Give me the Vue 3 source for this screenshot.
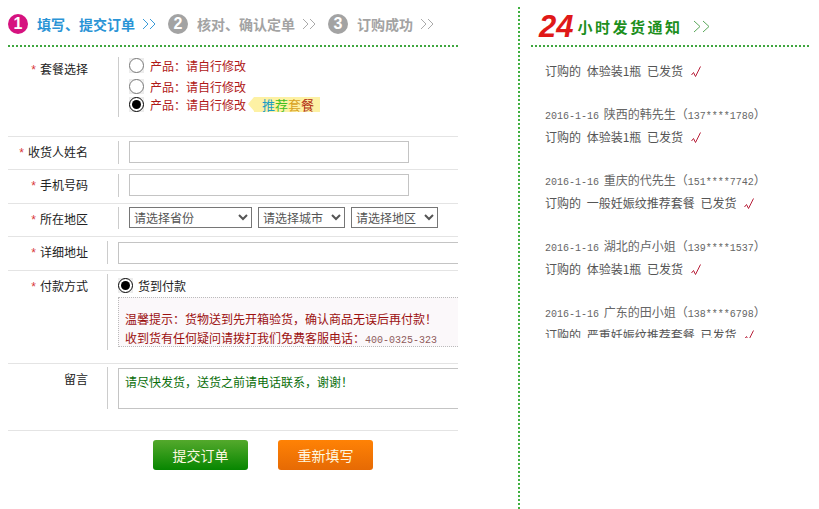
<template>
  <div class="page">
    <div class="col-left">
      <div class="steps">
        <template v-for="(s, i) in pasos" :key="s.texto">
          <span class="num" :class="{ on: i === 0 }">{{ i + 1 }}</span>
          <span class="step-text" :class="{ on: i === 0 }">{{ s.texto }}</span>
          <svg class="chev" width="14" height="12" viewBox="0 0 14 12" fill="none" :stroke="i === 0 ? '#3a9bd8' : '#aaa'" stroke-width="1">
            <path d="M1 1l5 5-5 5M8 1l5 5-5 5" />
          </svg>
        </template>
      </div>

      <form class="form" @submit.prevent>
        <div class="row row-combo">
          <label class="lab"><i>*</i> 套餐选择</label>
          <div class="cell combo">
            <label v-for="(p, i) in 3" :key="p" class="opt" :class="'opt' + p">
              <span class="radio-box"><input type="radio" name="combo" :checked="i === 2"></span>
              <span>产品&#xFF1A;请自行修改</span>
              <span v-if="i === 2" class="tag"><b class="c1">推</b><b class="c2">荐</b><b class="c3">套</b><b class="c4">餐</b></span>
            </label>
          </div>
        </div>

        <div class="row row-a">
          <label class="lab"><i>*</i> 收货人姓名</label>
          <div class="cell"><input class="txt" type="text"></div>
        </div>
        <div class="row row-b">
          <label class="lab"><i>*</i> 手机号码</label>
          <div class="cell"><input class="txt" type="text"></div>
        </div>
        <div class="row row-c">
          <label class="lab"><i>*</i> 所在地区</label>
          <div class="cell selects">
            <select class="s1"><option>请选择省份</option></select>
            <select class="s2"><option>请选择城市</option></select>
            <select class="s2"><option>请选择地区</option></select>
          </div>
        </div>
        <div class="row row-d">
          <label class="lab"><i>*</i> 详细地址</label>
          <div class="cell wide"><input class="txt full" type="text"></div>
        </div>
        <div class="row row-pay">
          <label class="lab"><i>*</i> 付款方式</label>
          <div class="cell wide">
            <label class="opt cod"><span class="radio-box"><input type="radio" name="pay" checked></span><span>货到付款</span></label>
            <div class="note">
              <p>温馨提示&#xFF1A;货物送到先开箱验货&#xFF0C;确认商品无误后再付款&#xFF01;</p>
              <p>收到货有任何疑问请拨打我们免费客服电话&#xFF1A;<span class="mono">400-0325-323</span></p>
            </div>
          </div>
        </div>
        <div class="row row-msg">
          <label class="lab">留言</label>
          <div class="cell wide">
            <textarea class="msg" v-model="mensaje"></textarea>
          </div>
        </div>
        <div class="btns">
          <button class="btn green" type="submit">提交订单</button>
          <button class="btn orange" type="reset">重新填写</button>
        </div>
      </form>
    </div>

    <div class="col-right">
      <div class="head">
        <span class="big">24</span>
        <span class="head-text">小时发货通知</span>
        <svg width="17" height="13" viewBox="0 0 17 13" fill="none" stroke="#5aa85a" stroke-width="1">
          <path d="M1 1l6 5.500-6 5.500M10 1l6 5.500-6 5.500" />
        </svg>
      </div>
      <div class="list">
        <div v-for="e in envios" :key="e.que + e.tel" class="item">
          <div v-if="e.tel" class="who"><span class="mono">{{ e.fecha }}</span> {{ e.quien }}&#xFF08;<span class="mono">{{ e.tel }}</span>&#xFF09;</div>
          <div class="what">订购的 {{ e.que }} 已发货
            <svg class="ok" width="11" height="12" viewBox="0 0 11 12" fill="none" stroke="#b8203a" stroke-width="1">
              <path d="M0.500 9L2.500 6.500 4.500 10.500 9.500 0.500" />
            </svg>
          </div>
        </div>
      </div>
    </div>
  </div>
</template>

<script setup>
import { ref } from 'vue';

const mensaje = ref('请尽快发货\uFF0C送货之前请电话联系\uFF0C谢谢\uFF01');

const pasos = [
  { texto: '填写、提交订单' },
  { texto: '核对、确认定单' },
  { texto: '订购成功' }
];

const envios = [
  { que: '体验装1瓶' },
  { fecha: '2016-1-16', quien: '陕西的韩先生', tel: '137****1780', que: '体验装1瓶' },
  { fecha: '2016-1-16', quien: '重庆的代先生', tel: '151****7742', que: '一般妊娠纹推荐套餐' },
  { fecha: '2016-1-16', quien: '湖北的卢小姐', tel: '139****1537', que: '体验装1瓶' },
  { fecha: '2016-1-16', quien: '广东的田小姐', tel: '138****6798', que: '严重妊娠纹推荐套餐' }
];
</script>

<style>
html, body { background: #fff; }
body { overflow: hidden; }
</style>

<style scoped>
.page {
  display: flex;
  width: 819px;
  height: 509px;
  overflow: hidden;
  font-family: "Noto Sans CJK SC", "Liberation Sans", sans-serif;
  font-size: 12px;
  color: #222;
}

.col-left {
  width: 450px;
  margin-left: 8px;
  flex-shrink: 0;
}

.steps {
  display: flex;
  align-items: center;
  height: 47px;
  padding-top: 3px;
  box-sizing: border-box;
  border-bottom: 2px dotted #3fa63f;
}

.num {
  width: 20px;
  height: 20px;
  border-radius: 50%;
  background: #a3a3a3;
  color: #fff;
  font: bold 16px/20px "Liberation Sans", sans-serif;
  text-align: center;
  margin-right: 9px;
}
.num.on { background: #d6127f; }

.step-text {
  font-size: 14px;
  font-weight: 700;
  color: #a3a3a3;
  white-space: nowrap;
}
.step-text.on { color: #2a94d6; }

.chev { margin: 0 12px 0 7px; }

.row {
  display: flex;
  border-bottom: 1px solid #e4e4e4;
  box-sizing: border-box;
  overflow: hidden;
}

.lab {
  width: 80px;
  flex-shrink: 0;
  text-align: right;
  line-height: 24px;
  color: #222;
  white-space: nowrap;
}
.lab i {
  color: #d8383a;
  font-style: normal;
  font-family: "Liberation Mono", monospace;
}

.cell {
  margin-left: 30px;
  padding-left: 10px;
  border-left: 1px solid #ccc;
  flex: 1;
  min-width: 0;
}
.cell.wide {
  margin-left: 19px;
  padding-left: 10px;
}

.row-combo { height: 90px; padding-top: 10px; }
.combo { height: 60px; display: flex; flex-direction: column; }
.opt {
  display: flex;
  align-items: center;
  color: #b01818;
  height: 20px;
}
.radio-box {
  display: block;
  width: 15px;
  height: 15px;
  margin-right: 6px;
  background: #ececec;
}
.radio-box input {
  display: block;
  width: 15px;
  height: 15px;
  margin: 0;
  accent-color: #000;
}
.opt1 { margin-top: -2px; height: 21px; }
.opt2 { height: 20px; margin-bottom: -2px; }

.tag {
  position: relative;
  display: flex;
  height: 15px;
  line-height: 15px;
  margin-left: 8px;
  padding: 0 6px 0 8px;
  background: #fdf1a4;
  font-size: 13px;
}
.tag::before {
  content: "";
  position: absolute;
  left: -6px;
  top: 0;
  border: 7.500px solid transparent;
  border-left: 0;
  border-right: 6px solid #fdf1a4;
}
.tag b { font-weight: 400; }
.c1 { color: #1b9ec4; }
.c2 { color: #3fbf1e; }
.c3 { color: #d9a21e; }
.c4 { color: #b02a10; }

.row-a { height: 33px; padding-top: 4px; }
.row-b { height: 34px; padding-top: 4px; }
.row-c { height: 33px; padding-top: 3px; }
.row-d { height: 34px; padding-top: 4px; }
.row-a .lab, .row-b .lab, .row-d .lab { line-height: 22px; }
.row-a .cell, .row-b .cell { height: 23px; }
.row-c .cell { height: 22px; }
.row-d .cell { height: 23px; }

.txt {
  display: block;
  width: 280px;
  height: 22px;
  box-sizing: border-box;
  border: 1px solid #c4c4c4;
  background: #fff;
  padding: 0 4px;
  outline: none;
}
.txt.full { width: 360px; margin-top: 1px; }

.selects { display: flex; gap: 6px; }
select {
  height: 21px;
  box-sizing: border-box;
  border: 1px solid #767676;
  background: #fff;
  color: #555;
  font: 12px "Noto Sans CJK SC", sans-serif;
  border-radius: 0;
  padding: 0;
}
.s1 { width: 123px; }
.s2 { width: 87px; }

.row-pay { height: 93px; padding-top: 3px; }
.row-pay .cell { height: 76px; }
.cod { color: #222; height: 22px; }
.cod .radio-box { margin-right: 5px; }
.note {
  margin-top: 1px;
  width: 360px;
  height: 50px;
  box-sizing: border-box;
  padding: 11px 0 0 6px;
  border: 1px dotted #bbb;
  background: #fbf8fa;
  color: #9c1010;
  line-height: 19px;
}
.note p { margin: 0; white-space: nowrap; }
.mono { font-family: "Liberation Mono", monospace; font-size: 10px; }
.note .mono { color: #8e5a5a; }

.row-msg { height: 67px; padding-top: 3px; }
.row-msg .cell { height: 42px; }
.msg {
  display: block;
  width: 360px;
  height: 41px;
  margin-top: 1px;
  box-sizing: border-box;
  border: 1px solid #c4c4c4;
  padding: 5px 6px;
  resize: none;
  outline: none;
  color: #0a6e0a;
  font: 12px/16px "Noto Sans CJK SC", sans-serif;
}

.btns {
  display: flex;
  gap: 30px;
  padding: 9px 0 0 145px;
}
.btn {
  width: 95px;
  height: 30px;
  border: 0;
  border-radius: 3px;
  color: #fdf8e0;
  font: 14px "Noto Sans CJK SC", sans-serif;
  padding: 0;
}
.green { background: linear-gradient(#54a92c, #078600); }
.orange { background: linear-gradient(#ff8205, #e66a04); }

.col-right {
  margin-left: 60px;
  padding-left: 11px;
  border-left: 2px dotted #3fb03f;
  margin-top: 7px;
  height: 502px;
  width: 278px;
}

.head {
  display: flex;
  align-items: center;
  height: 40px;
  border-bottom: 2px dotted #3fa63f;
  padding-left: 8px;
  box-sizing: border-box;
  white-space: nowrap;
}
.big {
  font: italic bold 31px/1 "Liberation Sans", sans-serif;
  color: #e01818;
  margin-right: 4px;
}
.head-text {
  font-size: 15px;
  font-weight: 700;
  letter-spacing: 2.500px;
  color: #1d8f1d;
  margin-right: 10px;
}

.list {
  height: 285px;
  overflow: hidden;
  margin-top: 6px;
  padding: 6px 0 0 14px;
  box-sizing: border-box;
  color: #555;
  word-spacing: 3px;
}
.item {
  margin-bottom: 21px;
  white-space: nowrap;
}
.who { line-height: 22px; height: 22px; color: #666; word-spacing: 2px; }
.what { line-height: 23px; height: 23px; }
.ok { vertical-align: -2px; margin-left: 2px; }
</style>
